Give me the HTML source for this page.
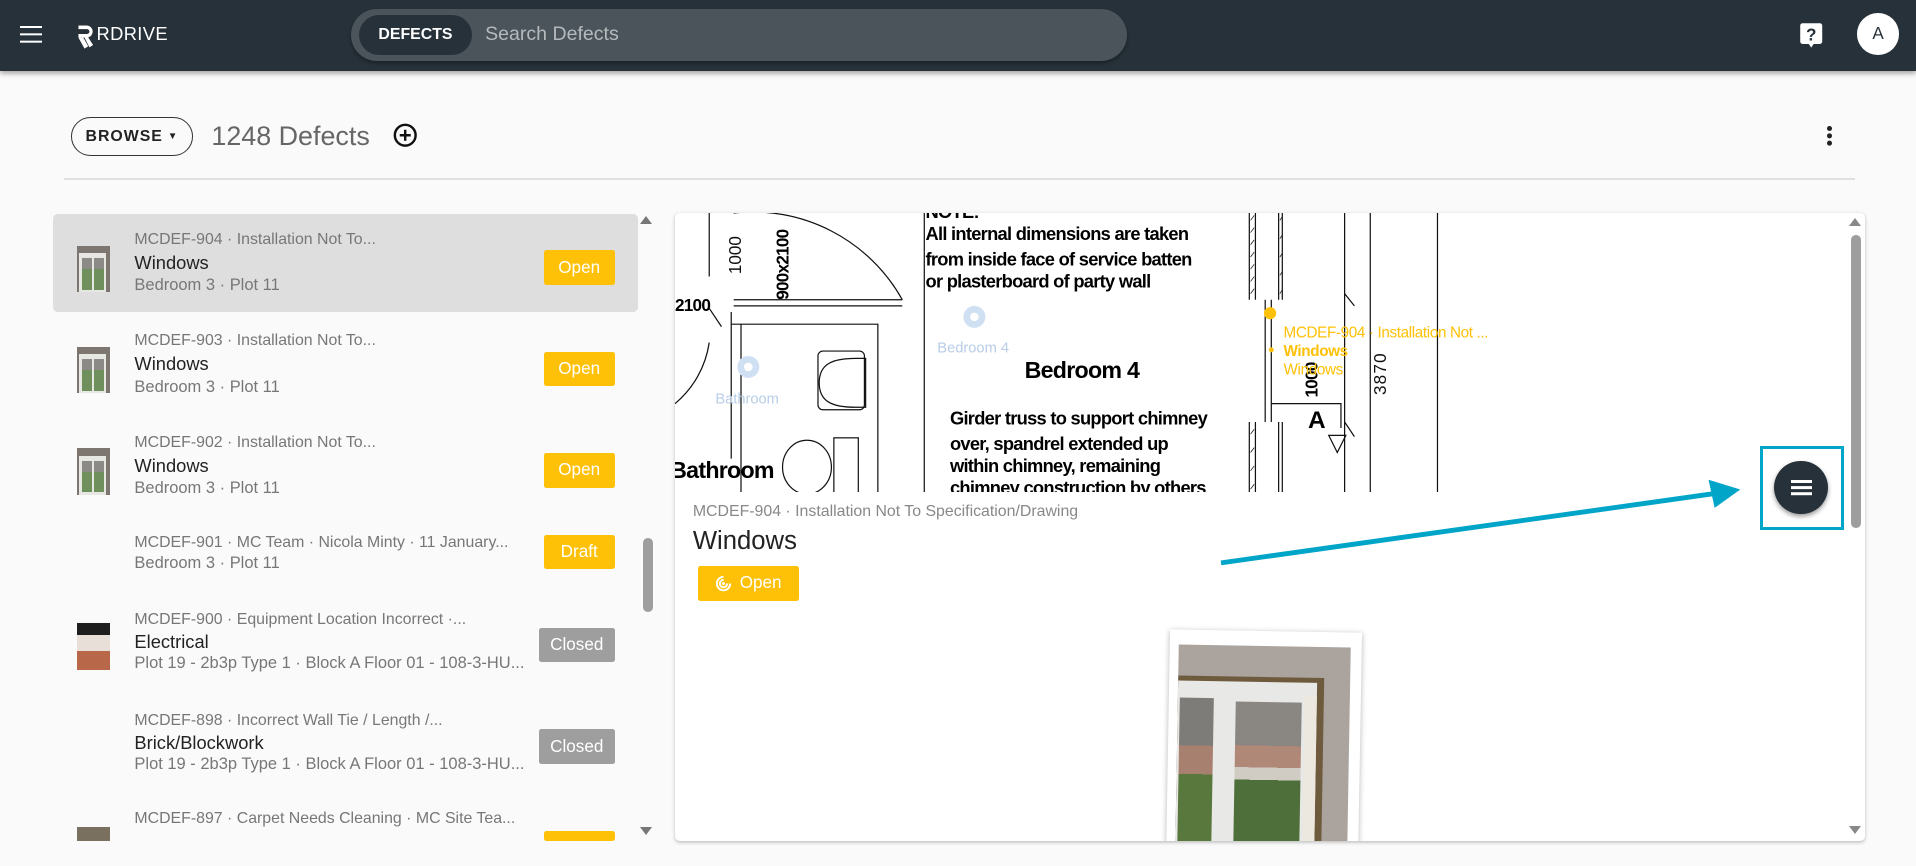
<!DOCTYPE html>
<html><head><meta charset="utf-8">
<style>
*{box-sizing:border-box;margin:0;padding:0}
html,body{width:1916px;height:866px;overflow:hidden;background:#fafafa;font-family:"Liberation Sans",Arial,sans-serif}
#w{zoom:1.22194;width:1568px;height:709px;position:relative;overflow:hidden;background:#fafafa}
.a{position:absolute}
.hdr{left:0;top:0;width:1568px;height:58px;background:#263139;box-shadow:0 2px 4px rgba(0,0,0,.35)}
.row .l1{position:absolute;left:110px;font-size:13px;color:#777;white-space:nowrap}
.row .l3{position:absolute;left:110px;font-size:13.5px;color:#777;white-space:nowrap}
.row .l2{position:absolute;left:110px;font-size:15px;color:#222;white-space:nowrap}
.badge{position:absolute;height:28px;border-radius:2px;color:#fff;font-size:14px;display:flex;align-items:center;justify-content:center}
.y{background:#ffc107}.g{background:#9e9e9e}
.thumb{position:absolute;left:63px;width:27px;height:38px;background:#7d7670;overflow:hidden}
.thumb i{position:absolute;left:2px;top:6px;width:22px;height:32px;background:#e6e6e2}
.thumb b{position:absolute;top:10px;width:8px;height:26px;background:linear-gradient(180deg,#8c8a86 0 35%,#6f8f5c 35%)}
</style></head><body><div id="w">

<div class="a hdr">
  <div class="a" style="left:16px;top:21px;width:18px;height:2px;background:#fff;box-shadow:0 6px 0 #fff,0 12px 0 #fff"></div>
  <svg class="a" style="left:62px;top:19px" width="16" height="22" viewBox="0 0 16 22"><path d="M2 2h7a5 5 0 0 1 1 9.8L14 18l-3 2-4-8H2V9h7a2 2 0 0 0 0-4H2z" fill="#fff"/><path d="M2 12h4l4 7-3 2z" fill="#fff"/></svg>
  <div class="a" style="left:79px;top:19px;color:#fff;font-size:15px;letter-spacing:.3px">RDRIVE</div>
  <div class="a" style="left:287px;top:7px;width:635px;height:43px;border-radius:22px;background:#4b545b;box-shadow:0 2px 3px rgba(0,0,0,.3)"></div>
  <div class="a" style="left:294px;top:12px;width:92px;height:33px;border-radius:17px;background:#263139;color:#fff;font-size:13px;font-weight:bold;display:flex;align-items:center;justify-content:center">DEFECTS</div>
  <div class="a" style="left:397px;top:19px;color:#b5babd;font-size:16px">Search Defects</div>
  <svg class="a" style="left:1472px;top:18px" width="20" height="22" viewBox="0 0 20 22"><rect x="1" y="1" width="18" height="17" rx="2" fill="#fff"/><path d="M8 18l2 3 2-3z" fill="#fff"/><text x="10" y="15" font-size="14" font-weight="bold" text-anchor="middle" fill="#263139" font-family="Liberation Sans">?</text></svg>
  <div class="a" style="left:1520px;top:11px;width:34px;height:34px;border-radius:50%;background:#fff;color:#263139;font-size:14px;display:flex;align-items:center;justify-content:center">A</div>
</div>

<div class="a" style="left:58px;top:96px;width:100px;height:32px;border:1px solid #333;border-radius:16px;font-size:13px;font-weight:bold;letter-spacing:.8px;color:#222;display:flex;align-items:center;justify-content:center">BROWSE <span style="font-size:8px;margin-left:4px">▼</span></div>
<div class="a" style="left:173px;top:99px;font-size:22px;color:#666">1248 Defects</div>
<svg class="a" style="left:322px;top:101px" width="20" height="20" viewBox="0 0 20 20"><circle cx="10" cy="10" r="8.5" fill="none" stroke="#111" stroke-width="2"/><path d="M10 5.5v9M5.5 10h9" stroke="#111" stroke-width="2"/></svg>
<div class="a" style="left:1495px;top:103px;width:4px;height:4px;border-radius:50%;background:#222;box-shadow:0 6px 0 #222,0 12px 0 #222"></div>
<div class="a" style="left:52px;top:146px;width:1466px;height:1px;background:#e0e0e0"></div>

<!-- list -->
<div class="a" style="left:43px;top:175px;width:479px;height:80px;background:#dedede;border-radius:4px"></div>
<div class="row">
 <div class="thumb" style="top:201px"><i></i><b style="left:4px"></b><b style="left:14px"></b></div>
 <div class="l1" style="top:189px">MCDEF-904 · Installation Not To...</div>
 <div class="l2" style="top:206px">Windows</div>
 <div class="l3" style="top:226px">Bedroom 3 · Plot 11</div>
 <div class="badge y" style="left:445px;top:205px;width:58px">Open</div>

 <div class="thumb" style="top:284px"><i></i><b style="left:4px"></b><b style="left:14px"></b></div>
 <div class="l1" style="top:272px">MCDEF-903 · Installation Not To...</div>
 <div class="l2" style="top:289px">Windows</div>
 <div class="l3" style="top:309px">Bedroom 3 · Plot 11</div>
 <div class="badge y" style="left:445px;top:288px;width:58px">Open</div>

 <div class="thumb" style="top:367px"><i></i><b style="left:4px"></b><b style="left:14px"></b></div>
 <div class="l1" style="top:355px">MCDEF-902 · Installation Not To...</div>
 <div class="l2" style="top:372px">Windows</div>
 <div class="l3" style="top:392px">Bedroom 3 · Plot 11</div>
 <div class="badge y" style="left:445px;top:371px;width:58px">Open</div>

 <div class="l1" style="top:437px">MCDEF-901 · MC Team · Nicola Minty · 11 January...</div>
 <div class="l3" style="top:453px">Bedroom 3 · Plot 11</div>
 <div class="badge y" style="left:445px;top:438px;width:58px">Draft</div>

 <div class="thumb" style="top:510px;background:linear-gradient(180deg,#1e1e1e 0 25%,#e8e0d8 25% 60%,#b86848 60%)"></div>
 <div class="l1" style="top:500px">MCDEF-900 · Equipment Location Incorrect ·...</div>
 <div class="l2" style="top:516px">Electrical</div>
 <div class="l3" style="top:535px">Plot 19 - 2b3p Type 1 · Block A Floor 01 - 108-3-HU...</div>
 <div class="badge g" style="left:441px;top:514px;width:62px">Closed</div>

 <div class="l1" style="top:583px">MCDEF-898 · Incorrect Wall Tie / Length /...</div>
 <div class="l2" style="top:599px">Brick/Blockwork</div>
 <div class="l3" style="top:618px">Plot 19 - 2b3p Type 1 · Block A Floor 01 - 108-3-HU...</div>
 <div class="badge g" style="left:441px;top:597px;width:62px">Closed</div>

 <div class="l1" style="top:663px">MCDEF-897 · Carpet Needs Cleaning · MC Site Tea...</div>
 <div style="position:absolute;left:0;top:688px;width:540px;height:30px;background:#fafafa"></div>
 <div class="thumb" style="top:677px;height:11px;background:#7a7060"></div>
 <div class="badge y" style="left:445px;top:680px;width:58px;height:8px"></div>
</div>
<div class="a" style="left:524px;top:177px;width:0;height:0;border-left:5px solid transparent;border-right:5px solid transparent;border-bottom:7px solid #777"></div>
<div class="a" style="left:524px;top:677px;width:0;height:0;border-left:5px solid transparent;border-right:5px solid transparent;border-top:7px solid #777"></div>
<div class="a" style="left:526px;top:440px;width:8px;height:61px;border-radius:4px;background:#9e9e9e"></div>

<!-- detail card -->
<div class="a" style="left:552px;top:174px;width:974px;height:514px;background:#fff;border-radius:4px;box-shadow:0 1px 3px rgba(0,0,0,.25);overflow:hidden">
<svg class="a" style="left:0;top:0" width="958" height="229" viewBox="552 174 958 229" font-family="Liberation Sans">
 <g fill="none" stroke="#111" stroke-width="1">
  <path d="M580 174v52M600 174 A140 140 0 0 1 738 245"/>
  <path d="M600 250h138M600 245h138M598 255v120M598 265h120v140M606 265v140M580 252l10 15"/>
  <path d="M700 293c-20 0-30 5-30 20s10 20 30 20h8v-40z"/>
  <rect x="669" y="287" width="38" height="48" rx="4"/>
  <ellipse cx="660" cy="382" rx="20" ry="22"/>
  <rect x="682" y="358" width="20" height="45"/>
  <path d="M580 280 A80 80 0 0 1 552 330"/>
  <path d="M756 174v229M1022 174v71M1027 174v71M1046 174v71M1049 174v71M1022 345v58M1027 345v58M1046 345v58M1049 345v58M1100 174v229M1121 174v229M1176 174v229M1035 245v100M1040 245v100M1040 330h57v20M1100 240l8 10M1100 345l8 12"/>
  <path d="M1087 356l7 14 7-14z"/>
 </g>
 <g stroke="#111" stroke-width=".6">
  <path d="M1023 180l3-4M1023 190l3-4M1023 200l3-4M1023 210l3-4M1023 220l3-4M1023 230l3-4M1023 240l3-4M1047 180l2-3M1047 195l2-3M1047 210l2-3M1047 225l2-3M1047 240l2-3M1023 355l3-4M1023 370l3-4M1023 385l3-4M1023 400l3-4"/>
 </g>
 <g font-weight="bold" fill="#000" font-size="15" letter-spacing="-.6">
  <text x="757" y="178">NOTE:</text>
  <text x="757" y="196">All internal dimensions are taken</text>
  <text x="757" y="217">from inside face of service batten</text>
  <text x="757" y="235">or plasterboard of party wall</text>
  <text x="777" y="347">Girder truss to support chimney</text>
  <text x="777" y="368">over, spandrel extended up</text>
  <text x="777" y="386">within chimney, remaining</text>
  <text x="777" y="404">chimney construction  by others</text>
  <text x="885" y="309" font-size="19" text-anchor="middle">Bedroom 4</text>
  <text x="548" y="391" font-size="19">Bathroom</text>
  <text x="552" y="254" font-size="14">2100</text>
  <text transform="translate(645 245) rotate(-90)" font-size="14">900x2100</text>
  <text x="1070" y="350" font-size="20">A</text>
  <text transform="translate(1078 325) rotate(-90)" font-size="14">1000</text>
 </g>
 <text transform="translate(606 224) rotate(-90)" font-size="14" fill="#111">1000</text>
 <text transform="translate(1134 323) rotate(-90)" font-size="14" fill="#111" letter-spacing="1">3870</text>
 <circle cx="797" cy="259" r="9" fill="#cfe0f3"/><circle cx="797" cy="259" r="3.5" fill="#fff"/>
 <text x="796" y="288" font-size="12" fill="#b8cde8" text-anchor="middle">Bedroom 4</text>
 <circle cx="612" cy="300" r="9" fill="#cfe0f3"/><circle cx="612" cy="300" r="3.5" fill="#fff"/>
 <text x="611" y="330" font-size="12" fill="#b8cde8" text-anchor="middle">Bathroom</text>
 <circle cx="1039" cy="256" r="5" fill="#ffc107"/><circle cx="1040" cy="286" r="2" fill="#ffc107"/>
 <g fill="#ffc107" font-size="12.5" letter-spacing="-.3">
  <text x="1050" y="276">MCDEF-904 · Installation Not ...</text>
  <text x="1050" y="291" font-weight="bold">Windows</text>
  <text x="1050" y="306">Windows</text>
 </g>
</svg>
 <div class="a" style="left:15px;top:238px;font-size:13px;color:#888">MCDEF-904 · Installation Not To Specification/Drawing</div>
 <div class="a" style="left:15px;top:257px;font-size:21px;color:#222">Windows</div>
 <div class="a" style="left:19px;top:289px;width:83px;height:29px;background:#ffc107;border-radius:2px;color:#fff;font-size:14px;display:flex;align-items:center;justify-content:center;gap:6px">
  <svg width="14" height="14" viewBox="0 0 14 14"><path d="M7 1.5A5.5 5.5 0 1 0 12.5 7" fill="none" stroke="#fff" stroke-width="1.6"/><path d="M7 4A3 3 0 1 0 10 7" fill="none" stroke="#fff" stroke-width="1.6"/><circle cx="7" cy="7" r="1.2" fill="#fff"/></svg>Open</div>
 <div class="a" style="left:404px;top:342px;width:157px;height:190px;background:#fff;box-shadow:0 1px 5px rgba(0,0,0,.3);transform:rotate(1deg)">
  <div class="a" style="left:7px;top:12px;width:141px;height:170px;background:#aaa39e;overflow:hidden">
   <div class="a" style="left:0;top:26px;width:120px;height:150px;background:#6e5a3c"></div>
   <div class="a" style="left:0;top:30px;width:114px;height:150px;background:#e8e8e6"></div>
   <div class="a" style="left:2px;top:44px;width:28px;height:130px;background:linear-gradient(180deg,#7e7c78 0 30%,#a88070 30% 48%,#58783e 48%)"></div>
   <div class="a" style="left:48px;top:46px;width:54px;height:128px;background:linear-gradient(180deg,#8a8682 0 28%,#b08878 28% 42%,#d0ccc4 42% 50%,#4e6e3a 50%)"></div>
   <div class="a" style="left:104px;top:40px;width:10px;height:130px;background:#ece8e0"></div>
  </div>
 </div>
 <div class="a" style="left:963px;top:18px;width:8px;height:240px;border-radius:4px;background:#9e9e9e"></div>
</div>
<div class="a" style="left:1513px;top:178px;width:0;height:0;border-left:5px solid transparent;border-right:5px solid transparent;border-bottom:7px solid #888"></div>
<div class="a" style="left:1513px;top:676px;width:0;height:0;border-left:5px solid transparent;border-right:5px solid transparent;border-top:7px solid #888"></div>

<!-- arrow + FAB -->
<svg class="a" style="left:990px;top:385px" width="440" height="85" viewBox="990 385 440 85"><path d="M999 461L1405 404" stroke="#00a5c8" stroke-width="4"/><path d="M1424 401L1398 393l5 23z" fill="#00a5c8"/></svg>
<div class="a" style="left:1440px;top:365px;width:69px;height:69px;border:3px solid #00a5c8"></div>
<div class="a" style="left:1452px;top:377px;width:44px;height:44px;border-radius:50%;background:#263139;box-shadow:0 2px 4px rgba(0,0,0,.4)"></div>
<div class="a" style="left:1466px;top:393px;width:17px;height:2px;background:#fff;box-shadow:0 5px 0 #fff,0 10px 0 #fff"></div>

</div></body></html>
